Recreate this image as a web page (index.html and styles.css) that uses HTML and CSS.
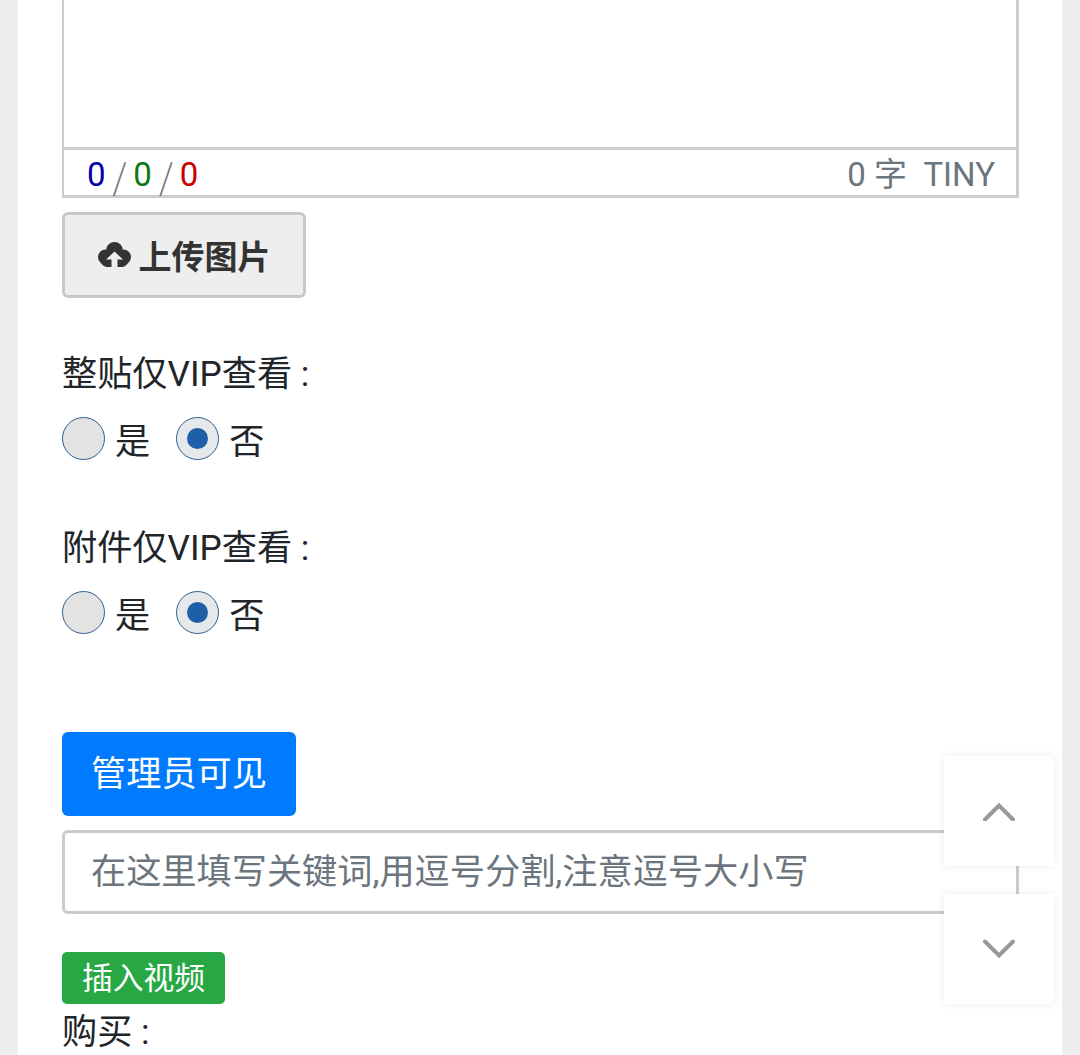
FILE: index.html
```html
<!DOCTYPE html>
<html lang="zh-CN">
<head>
  <meta charset="UTF-8">
  <title>发表帖子</title>
  <meta name="viewport" content="width=device-width, initial-scale=1.0">
  <link rel="stylesheet" href="styles.css">
</head>
<body>
  <main class="card">
    <!-- editor -->
    <div class="editor">
      <div class="editor-area"></div>
      <div class="editor-status">
        <div class="counts">
          <span class="c-blue">0</span><span class="sep">/</span><span class="c-green">0</span><span class="sep">/</span><span class="c-red">0</span>
        </div>
        <div class="words">0 字 &nbsp;TINY</div>
      </div>
    </div>

    <button type="button" class="upload-btn">
      <svg class="upload-icon" viewBox="0 0 33 25" aria-hidden="true">
        <g fill="#333">
          <circle cx="16.500" cy="8.500" r="8.500"/>
          <circle cx="7.500" cy="15" r="7.500"/>
          <circle cx="25.500" cy="15" r="7.500"/>
          <circle cx="9.500" cy="18" r="7"/>
          <circle cx="23.500" cy="18" r="7"/>
          <path d="M8 12h17v13H8z"/>
        </g>
        <path fill="#eee" d="M16.500 9.500 25 17.500h-5.500V25h-6v-7.500H8z"/>
      </svg>
      上传图片
    </button>

    <div class="fields">
      <div class="field">
        <div class="field-label">整贴仅VIP查看 :</div>
        <div class="radios">
          <label class="radio"><span class="radio-dot"></span>是</label>
          <label class="radio"><span class="radio-dot checked"></span>否</label>
        </div>
      </div>

      <div class="field">
        <div class="field-label">附件仅VIP查看 :</div>
        <div class="radios">
          <label class="radio"><span class="radio-dot"></span>是</label>
          <label class="radio"><span class="radio-dot checked"></span>否</label>
        </div>
      </div>
    </div>

    <button type="button" class="admin-btn">管理员可见</button>
    <input class="keyword-input" type="text" placeholder="在这里填写关键词,用逗号分割,注意逗号大小写">

    <button type="button" class="video-btn">插入视频</button>
    <div class="buy-label">购买 :</div>
  </main>

  <div class="float-btns">
    <a class="float-btn">
      <svg viewBox="0 0 34 20" aria-hidden="true"><path d="M3 18.500 17 4.500l14 14"/></svg>
    </a>
    <a class="float-btn">
      <svg viewBox="0 0 34 20" aria-hidden="true"><path d="M3 2.500 17 16.500 31 2.500"/></svg>
    </a>
  </div>
</body>
</html>
```

FILE: styles.css
```css
html, body {
  margin: 0;
  height: 1055px;
  overflow: hidden;
  background: #eeeeee;
  font-family: Roboto, "Noto Sans CJK SC", sans-serif;
  color: #212529;
}

.card {
  margin: 0 18px;
  padding: 0 43px 0 44px;
  height: 1055px;
  background: #fff;
  overflow: hidden;
}

/* editor */
.editor {
  border: solid #ccc;
  border-width: 0 3px 3px 2px;
}
.editor-area {
  height: 147px;
  border-bottom: 3px solid #ccc;
}
.editor-status {
  height: 41px;
  padding: 4px 21px 0 23px;
  display: flex;
  justify-content: space-between;
  align-items: center;
  font-size: 33px;
  line-height: 41px;
  color: #6c757d;
}
.counts { display: flex; gap: 7px; }
.sep {
  font-family: "Noto Sans CJK SC", sans-serif;
  font-size: 35px;
  font-weight: 300;
  line-height: 41px;
}
.c-blue { color: #0000a8; }
.c-green { color: #0a7a14; }
.c-red { color: #cc0000; }

.upload-btn {
  margin-top: 14px;
  width: 244px;
  height: 86px;
  display: flex;
  align-items: center;
  justify-content: center;
  gap: 8px;
  padding: 0;
  background: #eeeeee;
  border: 3px solid #c8c8c8;
  border-radius: 6px;
  font: 700 33px Roboto, "Noto Sans CJK SC", sans-serif;
  color: #333;
}
.upload-icon { width: 33px; height: 25px; margin-bottom: 2px; }

.fields { margin-top: 50px; }
.field { height: 174px; }
.field-label {
  font-size: 35.200px;
  line-height: 52px;
}
.radios {
  margin-top: 17px;
  display: flex;
  gap: 26px;
}
.radio {
  display: flex;
  align-items: flex-start;
  gap: 10px;
  font-size: 35.200px;
  line-height: 51px;
}
.radio-dot {
  width: 43px;
  height: 43px;
  box-sizing: border-box;
  border: 1.500px solid #2c5f8f;
  border-radius: 50%;
  background: #e3e3e3;
  display: flex;
  align-items: center;
  justify-content: center;
}
.radio-dot.checked { background: #e6e8eb; }
.radio-dot.checked::after {
  content: "";
  width: 21px;
  height: 21px;
  border-radius: 50%;
  background: #1f5fa8;
}

.admin-btn {
  display: block;
  margin-top: 36px;
  width: 234px;
  height: 84px;
  padding: 0 0 8px;
  border: 0;
  border-radius: 6px;
  background: #007bff;
  color: #fff;
  font: 400 35.200px Roboto, "Noto Sans CJK SC", sans-serif;
}
.keyword-input {
  display: block;
  margin-top: 14px;
  width: 100%;
  height: 84px;
  box-sizing: border-box;
  padding: 0 26px;
  border: 3px solid #ccc;
  border-radius: 6px;
  font: 400 35.200px Roboto, "Noto Sans CJK SC", sans-serif;
  color: #495057;
}
.keyword-input::placeholder { color: #6c757d; opacity: 1; }

.video-btn {
  display: block;
  margin-top: 38px;
  width: 163px;
  height: 52px;
  padding: 0 0 6px;
  border: 0;
  border-radius: 5px;
  background: #28a745;
  color: #fff;
  font: 400 30.800px Roboto, "Noto Sans CJK SC", sans-serif;
}
.buy-label {
  font-size: 35.200px;
  line-height: 56px;
}

/* floating scroll buttons */
.float-btns {
  position: fixed;
  left: 944px;
  top: 756px;
  display: flex;
  flex-direction: column;
  gap: 28px;
}
.float-btn {
  width: 110px;
  height: 110px;
  display: flex;
  align-items: center;
  justify-content: center;
  background: #fff;
  box-shadow: 0 0 8px rgba(0,0,0,0.08);
}
.float-btn svg {
  width: 34px;
  height: 20px;
  fill: none;
  stroke: #999;
  stroke-width: 4;
  stroke-linecap: round;
  stroke-linejoin: miter;
}
```
